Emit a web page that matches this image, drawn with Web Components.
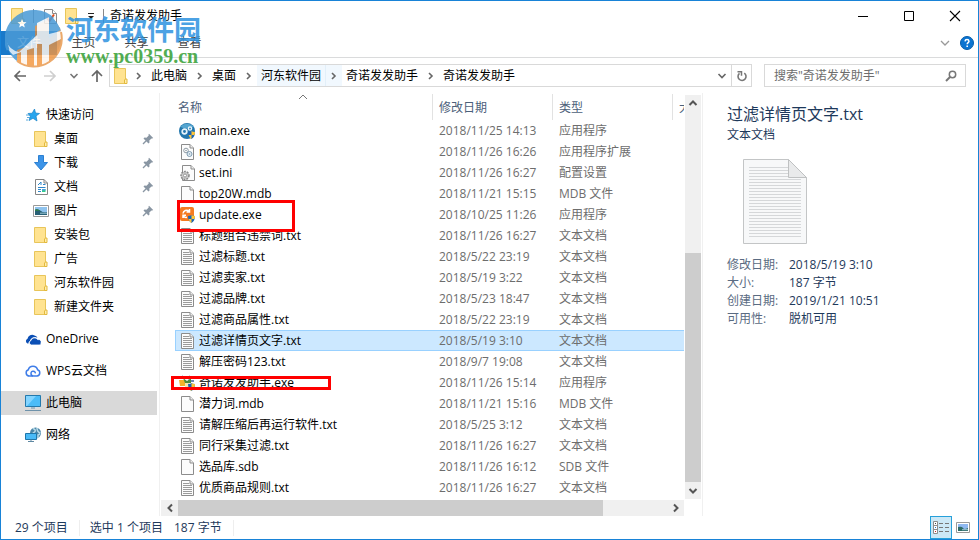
<!DOCTYPE html>
<html lang="zh-CN">
<head>
<meta charset="utf-8">
<title>奇诺发发助手</title>
<style>
html,body{margin:0;background:#fff}
body{font:12px/16px "Open Sans","Noto Sans CJK SC",sans-serif;color:#000}
</style>
</head>
<body>
<explorer-window></explorer-window>
<script>
const ICONS = {
folder:['0 0 14 16',`<path d="M.5.5h11v15H.5z" fill="#ffe391" stroke="#e8c55a"/><path d="M10.500 15.500v-3.500l1-1h1.500v4.500z" fill="#ffeeb0" stroke="#e3b93c"/>`],
check:['0 0 13 15',`<path d="M.5.5h8l4 4v10H.5z" fill="#fafafa" stroke="#8a8a8a"/><path d="M8.500.5v4h4" fill="#fff" stroke="#8a8a8a"/><path d="M3 9l2.500 3L10 5.500" fill="none" stroke="#e0501e" stroke-width="2"/>`],
qat:['0 0 8 8',`<path d="M1 1.500h6" stroke="#222"/><path d="M1 4h6L4 7z" fill="#222"/>`],
min:['0 0 12 12',`<path d="M1 6.500h10" stroke="#000"/>`],
max:['0 0 12 12',`<path d="M1.500 1.500h9v9h-9z" fill="none" stroke="#000"/>`],
close:['0 0 12 12',`<path d="M1 1l10 10M11 1L1 11" stroke="#000" stroke-width="1.100"/>`],
down:['0 0 10 8',`<path d="M1.500 2L5 5.500 8.500 2" fill="none" stroke="currentColor" stroke-width="1.600"/>`],
downthin:['0 0 10 8',`<path d="M1 2l4 4 4-4" fill="none" stroke="#999" stroke-width="1.300"/>`],
help:['0 0 14 14',`<circle cx="7" cy="7" r="6.500" fill="#0b74d1" stroke="#075da9"/><path d="M5 5.300Q5.200 3.500 7 3.500T9 5.300C9 6.700 7.200 6.700 7.200 8.300" fill="none" stroke="#fff" stroke-width="1.500"/><path d="M6.400 9.500h1.600v1.500H6.400z" fill="#fff"/>`],
back:['0 0 14 12',`<path d="M13 6H2M7 1L2 6l5 5" fill="none" stroke="#666" stroke-width="1.700"/>`],
fwd:['0 0 14 12',`<path d="M1 6h11M7 1l5 5-5 5" fill="none" stroke="#cfcfcf" stroke-width="1.700"/>`],
up:['0 0 12 14',`<path d="M6 13V2M1 7l5-5 5 5" fill="none" stroke="#666" stroke-width="1.700"/>`],
right:['0 0 8 10',`<path d="M2 2l3 3-3 3" fill="none" stroke="currentColor" stroke-width="1.600"/>`],
refresh:['0 0 12 12',`<path d="M8.300 3.200A4 4 0 1 1 3.500 3.400" fill="none" stroke="#777" stroke-width="1.600"/><path d="M1.500 1.700h4v4" fill="none" stroke="#777" stroke-width="1.500"/>`],
search:['0 0 12 12',`<circle cx="7.500" cy="4.500" r="3.200" fill="none" stroke="#777" stroke-width="1.500"/><path d="M5 7L1 11" stroke="#777" stroke-width="2"/>`],
star:['0 0 14 14',`<path d="M8.500 1l1 4 4 .5-3.500 2.500 1 5-4-2.700-4 2.200 1.300-4.200L2 5.500l4.200-.300z" fill="#27a5ee" stroke="#1683c9" stroke-width=".7"/><path d="M0 7h3M1 9.500h3M0 12h2" stroke="#5aa9dc"/>`],
download:['0 0 16 16',`<path d="M5.500.5h5v7h4L8 15 1.500 7.500h4z" fill="#3c94e8" stroke="#2c80d2"/>`],
docs:['0 0 13 16',`<path d="M.5.5h8.500l3.500 3.500v11.500H.5z" fill="#fff" stroke="#858585"/><path d="M9 .5v3.500h3.500" fill="none" stroke="#858585"/><path d="M3 6l3-3v3M8 5.500h2.500M3 8.500h7.500M3 10.500h3M3 12.500h3" stroke="#2e86c9" fill="none"/><path d="M7 10h3.500v3H7z" fill="#3c8"/><path d="M7 10h3.500v1.500H7z" fill="#48a0e0"/>`],
picture:['0 0 16 12',`<path d="M.5.5h15v11H.5z" fill="#fff" stroke="#999"/><path d="M2 2h12v8H2z" fill="#8fc3ee"/><path d="M2 5q4-1 6 1t6 1v3H2z" fill="#276075"/><path d="M2 4.500q3-1.500 5 1.500H2z" fill="#2f7a50"/><path d="M7 8.200h7" stroke="#9fc8d8"/>`],
thumbs:['0 0 14 11',`<path d="M.5.5h13v10H.5z" fill="#fff" stroke="#999"/><path d="M2 2h10v7H2z" fill="#8fb8f0"/><path d="M2 5q4-1 5 1t5 0v3H2z" fill="#2d6b66"/><path d="M6 7.700h6" stroke="#9fc8d8"/>`],
pin:['0 0 12 12',`<path d="M7 .8L11.200 5l-1 .6-.7-.2L7.300 7.600l.2 2-1 1L1.500 5.500l1-1 2 .2 2.200-2.200-.2-.9z" fill="#8996a3"/><path d="M4.200 7.800L1 11" stroke="#8996a3" stroke-width="1.300"/>`],
onedrive:['0 0 16 11',`<path d="M2.500 9.500A2.600 2.600 0 0 1 2.500 4.700 4.600 4.600 0 0 1 9.500 1.400 4 4 0 0 1 12.500 4 5 5 0 0 0 4.800 7.200Q3.200 8 3.500 9.500z" fill="#0b4fb5"/><path d="M6.500 11A2.300 2.300 0 0 1 6 6.500 3.600 3.600 0 0 1 12.600 5.600 2.700 2.700 0 0 1 14.300 11z" fill="#0b4fb5" stroke="#fff" stroke-width=".8"/>`],
wps:['0 0 16 12',`<path d="M4 11A3.200 3.200 0 0 1 3.300 4.800 4.800 4.800 0 0 1 12.600 4.800 3.200 3.200 0 0 1 12 11H8.500Q6 11 6 8.500T8.300 6.300 10.300 8.300" fill="none" stroke="#3f7de8" stroke-width="1.500"/><path d="M3.500 11H8" stroke="#3f7de8" stroke-width="1.500"/>`],
pc:['0 0 16 16',`<path d="M.5.5h15v11H.5z" fill="#4bbcf8" stroke="#2479ac"/><path d="M1 1h10L2 11H1z" fill="#83d4ff"/><path d="M4 12.500h8" stroke="#cfe0ea"/><path d="M6 13h4M0 15.500h16" stroke="#6e92aa"/>`],
network:['0 0 16 16',`<circle cx="10.500" cy="6" r="5.500" fill="#4b86a8"/><path d="M8 1.500q3 1 2 3L7 7M12 1q0 4 3.500 5M13 11V8l2-1" fill="none" stroke="#b9dbe9" stroke-width="1.500"/><path d="M.5 6.500h11v6H.5z" fill="#49baf7" stroke="#1e76aa"/><path d="M3 14.500h6M6 12.500v2" stroke="#5e88a2"/>`],
blank:['0 0 13 16',`<path d="M.5.5h8.500l3.500 3.500v11.500H.5z" fill="#fcfcfc" stroke="#8c8c8c"/><path d="M9 .5v3.500h3.500" fill="#eee" stroke="#8c8c8c"/>`],
text:['0 0 13 16',`<path d="M.5.5h8.500l3.500 3.500v11.500H.5z" fill="#fcfcfc" stroke="#8c8c8c"/><path d="M9 .5v3.500h3.500" fill="#eee" stroke="#8c8c8c"/><path d="M2 3.500h6M2 5.500h9M2 7.500h9M2 9.500h9M2 11.500h9M2 13.500h9" stroke="#9b9b9b"/>`],
dll:['0 0 13 16',`<path d="M.5.5h8.500l3.500 3.500v11.500H.5z" fill="#fcfcfc" stroke="#8c8c8c"/><path d="M9 .5v3.500h3.500" fill="#eee" stroke="#8c8c8c"/><circle cx="5" cy="6.500" r="2.300" fill="#fff" stroke="#8e9aa3"/><circle cx="5" cy="6.500" r=".8" fill="#8e9aa3"/><circle cx="8.500" cy="10" r="2.500" fill="#e6f0f7" stroke="#7f9bb0"/><circle cx="8.500" cy="10" r=".8" fill="#7f9bb0"/>`],
ini:['0 0 15 16',`<path d="M2.500.5h8.500l3.500 3.500v11.500h-12z" fill="#fcfcfc" stroke="#8c8c8c"/><path d="M11 .5v3.500h3.500" fill="#eee" stroke="#8c8c8c"/><circle cx="5" cy="10.500" r="4" fill="#c9c9c9" stroke="#888" stroke-width="1.500" stroke-dasharray="1.800 1.100"/><circle cx="5" cy="10.500" r="1.500" fill="#fff" stroke="#888" stroke-width=".8"/>`],
main:['0 0 16 16',`<circle cx="8" cy="8" r="8" fill="#2377ad"/><path d="M1.500 4A8 8 0 0 1 14.500 4Q8 7 1.500 4z" fill="#54a5d0"/><circle cx="5.500" cy="8.500" r="2.300" fill="none" stroke="#e8f4fb" stroke-width="1.700"/><circle cx="11" cy="5.500" r="1.600" fill="none" stroke="#e8f4fb" stroke-width="1.400"/><path d="M9 9q2.500 0 3.500-1 1 1 3.500 1 0 5-3.500 7Q9 14 9 9z" fill="#1c65b4"/><path d="M12.500 8q1 1 3.500 1 0 2-.6 3h-2.900zM9.600 12h2.900v4q-2-1-2.900-4z" fill="#ffc637"/>`],
update:['0 0 16 16',`<rect x="1" width="14" height="14" rx="2" fill="#f47b20"/><path d="M4 6.500a3.600 3.600 0 0 1 6-2.300M10.500 2v3H7.500M4 11V8.200h3M4.400 8.800a3.300 3.300 0 0 0 3.600 1.500" fill="none" stroke="#fff" stroke-width="1.500"/><path d="M9 9q2.500 0 3.500-1 1 1 3.500 1 0 5-3.500 7Q9 14 9 9z" fill="#1c65b4"/><path d="M12.500 8q1 1 3.500 1 0 2-.6 3h-2.900zM9.600 12h2.900v4q-2-1-2.900-4z" fill="#ffc637"/>`],
assistant:['0 0 16 16',`<path d="M0 5h6v6H1z" fill="#f3b42c"/><path d="M4 3l4 3 4-3v5H6z" fill="#4d8e3c"/><path d="M6 8h4v4H6z" fill="#f5e9b0"/><path d="M3 1l2 2M9 4l2-3M12 6h3" stroke="#3a5f9b" stroke-width="1.500" fill="none"/><path d="M9 9q2.500 0 3.500-1 1 1 3.500 1 0 5-3.500 7Q9 14 9 9z" fill="#1c65b4"/><path d="M12.500 8q1 1 3.500 1 0 2-.6 3h-2.900zM9.600 12h2.900v4q-2-1-2.900-4z" fill="#ffc637"/>`],
page:['0 0 64 85',`<path d="M.5.5h45l18 18v66H.5z" fill="#f7f8f9" stroke="#c3c5c6"/><path d="M6 8.500h39M6 11.500h39M6 14.500h39M6 17.500h39M6 20.500h52M6 23.500h52M6 26.500h52M6 29.500h52M6 32.500h52M6 35.500h52M6 38.500h52M6 41.500h52M6 44.500h52M6 47.500h52M6 50.500h52M6 53.500h52M6 56.500h52M6 59.500h52M6 62.500h52M6 65.500h52M6 68.500h52M6 71.500h52M6 74.500h52M6 77.500h52" stroke="#d5d7d9"/><path d="M45.500.5v18h18z" fill="#e9eaeb" stroke="#bfc1c2"/>`],
details:['0 0 16 13',`<path d="M.5.5h4v12h-4zM.5 4.500h4M.5 8.500h4" fill="#fff" stroke="#8d8d8d"/><path d="M2 2h1v1H2z" fill="#444"/><path d="M2 6h1v1H2z" fill="#27c"/><path d="M2 10h1v1H2z" fill="#c22"/><path d="M6 2.500h4M12 2.500h4M6 6.500h4M12 6.500h4M6 10.500h4M12 10.500h4" stroke="#777"/>`],
sort:['0 0 10 6',`<path d="M1 5l4-4 4 4" fill="none" stroke="#777"/>`],
barup:['0 0 10 8',`<path d="M1.500 6L5 2.500 8.500 6" fill="none" stroke="#555" stroke-width="2"/>`],
bardown:['0 0 10 8',`<path d="M1.500 2L5 5.500 8.500 2" fill="none" stroke="#555" stroke-width="2"/>`],
barleft:['0 0 8 10',`<path d="M6 1.500L2.500 5 6 8.500" fill="none" stroke="#555" stroke-width="2"/>`],
barright:['0 0 8 10',`<path d="M2 1.500L5.500 5 2 8.500" fill="none" stroke="#555" stroke-width="2"/>`],
logo:['0 0 58 58',`<defs><clipPath id="c"><circle cx="29" cy="29" r="28"/></clipPath><linearGradient id="g" x1="0" y1="0" x2="0" y2="1"><stop offset=".3" stop-color="#c98a50"/><stop offset=".8" stop-color="#f49a45"/></linearGradient></defs><g clip-path="url(#c)"><path d="M0 0h58v58H0z" fill="#4a9ad6"/><path d="M12 40l18-6V16l12-6 16 8v40H12z" fill="url(#g)"/><path d="M34 0q14 6 24 18l-14 10V8z" fill="#4a9ad6"/><path d="M1 30Q4 40 14 42L32 25V13L44 7v17l12-3v8L44 35v21h-7V34h-5v24h-3V38l-7 2v18h-6V42l-8 3Q2 40 1 30z" fill="#fff" opacity=".9"/></g><path d="M17 9l1.300 3 3.200.2-2.500 2 .8 3.300-2.800-1.800-2.800 1.800.8-3.300-2.500-2 3.200-.200z" fill="#fff"/><path d="M3 40A28 28 0 0 1 48 9" fill="none" stroke="#4a9ad6" stroke-width="3"/><path d="M56 22A28 28 0 0 1 12 51" fill="none" stroke="#e99b52" stroke-width="2"/>`]
};

const define = (name, css, html) => customElements.define(name, class extends HTMLElement {
  connectedCallback() {
    if (this.shadowRoot) return;
    const t = document.createElement('template');
    const reset = '*{box-sizing:border-box}button{font:inherit;color:inherit;border:0;background:none;padding:0;margin:0;display:flex;align-items:center;justify-content:center}a{color:inherit;text-decoration:none}';
    t.innerHTML = `<style>:host{display:block;box-sizing:border-box}${reset}${css}</style>` + (typeof html === 'function' ? html(this) : html);
    this.attachShadow({mode: 'open'}).append(t.content.cloneNode(true));
  }
});

define('ui-icon', ':host{display:inline-flex;flex:none}svg{display:block}', el => {
  const [box, body] = ICONS[el.getAttribute('name')];
  const [, , w, h] = box.split(' ');
  return `<svg viewBox="${box}" width="${w}" height="${h}" aria-hidden="true">${body}</svg>`;
});

define('title-bar', `
:host{display:flex;align-items:center;height:30px;padding-left:10px}
.sep{width:1px;height:14px;background:#888}
.qat{display:flex;align-items:center;gap:8px}
.qat .sep:first-of-type{margin-right:2px}
h1{font:inherit;margin:0 auto 0 6px}
.win{display:flex}
.win button{width:46px;height:28px}`,
`<div class="qat"><ui-icon name="folder"></ui-icon><span class="sep"></span><button aria-label="属性"><ui-icon name="check"></ui-icon></button><button aria-label="新建文件夹"><ui-icon name="folder"></ui-icon></button><button aria-label="自定义"><ui-icon name="qat"></ui-icon></button><span class="sep"></span></div>
<h1>奇诺发发助手</h1>
<div class="win"><button aria-label="最小化"><ui-icon name="min"></ui-icon></button><button aria-label="最大化"><ui-icon name="max"></ui-icon></button><button aria-label="关闭"><ui-icon name="close"></ui-icon></button></div>`);

define('ribbon-tabs', `
:host{display:flex;align-items:flex-start;height:27px;border-bottom:1px solid #dadbdc;color:#444}
button{height:24px;width:53px}
.file{background:#1979ca;color:#fff;width:56px}
.end{margin-left:auto;display:flex;align-items:center;gap:10px;padding-right:4px}
.end button{width:auto}`,
`<button class="file">文件</button><button>主页</button><button>共享</button><button>查看</button>
<div class="end"><button aria-label="展开功能区"><ui-icon name="downthin"></ui-icon></button><button aria-label="帮助"><ui-icon name="help"></ui-icon></button></div>`);

define('crumb-item', `
:host{display:flex;align-items:stretch}
a{display:flex;align-items:center;padding:0 4px;white-space:nowrap}
button{width:17px;color:#666}
:host([active]){background:#f1f8fe}
:host([active]) button{border-left:1px solid #e2eff9}`,
el => `<a href="#"><slot></slot></a>` + (el.hasAttribute('last') ? '' : `<button aria-label="展开"><ui-icon name="right"></ui-icon></button>`));

define('address-bar', `
:host{display:flex;align-items:center;height:35px;padding:0 12px;color:#000}
.go{display:flex;align-items:center;width:96px;gap:12px;color:#777}
.go button:first-child{margin-right:4px}
nav{flex:1;display:flex;height:23px;border:1px solid #d9d9d9;padding-left:4px;min-width:0}
nav>ui-icon{align-self:center}
.root{width:16px;color:#666;margin-left:3px}
.drop{margin-left:auto;width:18px;color:#666}
.re{width:20px;border-left:1px solid #d9d9d9}
form{display:flex;align-items:center;width:202px;height:23px;border:1px solid #d9d9d9;margin:0 0 0 12px;padding:0 8px 0 9px}
input{flex:1;min-width:0;border:0;padding:0;outline:0;font:inherit;background:none}
input::placeholder{color:#6d6d6d;opacity:1}`,
`<div class="go"><button aria-label="后退"><ui-icon name="back"></ui-icon></button><button aria-label="前进"><ui-icon name="fwd"></ui-icon></button><button aria-label="最近位置"><ui-icon name="down"></ui-icon></button><button aria-label="上移"><ui-icon name="up"></ui-icon></button></div>
<nav aria-label="地址"><ui-icon name="folder"></ui-icon><button class="root" aria-label="展开"><ui-icon name="right"></ui-icon></button>
<crumb-item>此电脑</crumb-item><crumb-item>桌面</crumb-item><crumb-item active>河东软件园</crumb-item><crumb-item>奇诺发发助手</crumb-item><crumb-item last>奇诺发发助手</crumb-item>
<button class="drop" aria-label="历史"><ui-icon name="down"></ui-icon></button><button class="re" aria-label="刷新"><ui-icon name="refresh"></ui-icon></button></nav>
<form><input type="search" aria-label="搜索" placeholder='搜索"奇诺发发助手"'><button type="button" aria-label="搜索"><ui-icon name="search"></ui-icon></button></form>`);

define('nav-item', `
a{display:flex;align-items:center;height:24px;padding:0 3px 0 24px}
:host([sub]) a{padding-left:32px}
:host([gap]){margin-top:8px}
:host([selected]) a{background:#d9d9d9}
.ic{display:flex;justify-content:center;width:16px;margin-right:5px}
span{flex:1;white-space:nowrap}`,
el => `<a href="#"><div class="ic"><ui-icon name="${el.getAttribute('icon')}"></ui-icon></div><span><slot></slot></span>${el.hasAttribute('pinned') ? '<ui-icon name="pin"></ui-icon>' : ''}</a>`);

define('nav-pane', `
:host{flex:0 0 159px;padding:10px 2px 0 0;border-right:1px solid #f0f0f0}`,
`<nav aria-label="导航">
<nav-item icon="star">快速访问</nav-item>
<nav-item sub pinned icon="folder">桌面</nav-item><nav-item sub pinned icon="download">下载</nav-item><nav-item sub pinned icon="docs">文档</nav-item><nav-item sub pinned icon="picture">图片</nav-item>
<nav-item sub icon="folder">安装包</nav-item><nav-item sub icon="folder">广告</nav-item><nav-item sub icon="folder">河东软件园</nav-item><nav-item sub icon="folder">新建文件夹</nav-item>
<nav-item gap icon="onedrive">OneDrive</nav-item><nav-item gap icon="wps">WPS云文档</nav-item><nav-item gap selected icon="pc">此电脑</nav-item><nav-item gap icon="network">网络</nav-item></nav>`);

define('scroll-bar', `
:host{display:flex;background:#f0f0f0}
:host([dir=v]){flex-direction:column;width:16px}
:host([dir=h]){height:16px}
button{width:16px;height:16px}
:host([dir=h]) button{width:17px}
.track{flex:1;display:flex;flex-direction:inherit}
.thumb{background:#cdcdcd}`,
el => {
  const v = el.getAttribute('dir') === 'v';
  return `<button aria-label="${v ? '向上' : '向左'}"><ui-icon name="${v ? 'barup' : 'barleft'}"></ui-icon></button><div class="track"><div style="flex:${el.getAttribute('before')}"></div><div class="thumb" style="flex:${el.getAttribute('size')}"></div><div style="flex:${el.getAttribute('after')}"></div></div><button aria-label="${v ? '向下' : '向右'}"><ui-icon name="${v ? 'bardown' : 'barright'}"></ui-icon></button>`;
});

const FILES = [
['main','main.exe','2018/11/25 14:13','应用程序'],['dll','node.dll','2018/11/26 16:26','应用程序扩展'],['ini','set.ini','2018/11/26 16:27','配置设置'],['blank','top20W.mdb','2018/11/21 15:15','MDB 文件'],['update','update.exe','2018/10/25 11:26','应用程序'],['text','标题组合违禁词.txt','2018/11/26 16:27','文本文档'],['text','过滤标题.txt','2018/5/22 23:19','文本文档'],['text','过滤卖家.txt','2018/5/19 3:22','文本文档'],['text','过滤品牌.txt','2018/5/23 18:47','文本文档'],['text','过滤商品属性.txt','2018/5/22 23:19','文本文档'],['text','过滤详情页文字.txt','2018/5/19 3:10','文本文档'],['text','解压密码123.txt','2018/9/7 19:08','文本文档'],['assistant','奇诺发发助手.exe','2018/11/26 15:14','应用程序'],['blank','潜力词.mdb','2018/11/21 15:16','MDB 文件'],['text','请解压缩后再运行软件.txt','2018/5/25 3:12','文本文档'],['text','同行采集过滤.txt','2018/11/26 16:27','文本文档'],['blank','选品库.sdb','2018/11/26 16:12','SDB 文件'],['text','优质商品规则.txt','2018/11/26 16:27','文本文档']];

define('file-table', `
:host{position:relative;overflow:hidden;padding:1px 0 0 15px;flex:1;min-width:0}
table{border-collapse:separate;border-spacing:0;table-layout:fixed;width:100%;line-height:16px}
col.d,col.t{width:120px}col.s{width:12px}
th{height:26px;padding:2px 0 0 6px;font-weight:normal;text-align:left;color:#4c607a;border-left:1px solid #e2e2e2;overflow:hidden;white-space:nowrap}
th:first-child{border:0;padding-left:3px}
.sort{position:absolute;left:138px;top:1px}
td{height:21px;padding:0 0 0 7px;color:#6d6d6d;white-space:nowrap;overflow:hidden;border:solid transparent;border-width:1px 0}
td:first-child{color:#000;padding-left:3px;border-left-width:1px}
.n{display:flex;align-items:center}
.i{display:flex;justify-content:center;width:16px;margin-right:4px}
tr.sel td{background:#cce8ff;border-color:#99d1ff}
mark{position:absolute;background:none;border:3px solid #f00}
mark.one{left:17px;top:107px;width:118px;height:32px}
mark.two{left:11px;top:283px;width:160px;height:14px}`,
`<table><colgroup><col><col class="d"><col class="t"><col class="s"></colgroup><thead><tr><th>名称<ui-icon class="sort" name="sort"></ui-icon></th><th>修改日期</th><th>类型</th><th>大小</th></tr></thead><tbody>${FILES.map((f, i) => `<tr${i === 10 ? ' class="sel"' : ''}><td><div class="n"><span class="i"><ui-icon name="${f[0]}"></ui-icon></span>${f[1]}</div></td><td>${f[2]}</td><td>${f[3]}</td><td></td></tr>`).join('')}</tbody></table><mark class="one"></mark><mark class="two"></mark>`);

define('file-list', `
:host{flex:1;min-width:0;display:flex;flex-direction:column}
.row{flex:1;display:flex;min-height:0}
scroll-bar[dir=h]{margin:0 17px 0 1px}
scroll-bar[dir=v]{margin:2px 0 1px 1px}`,
`<div class="row"><file-table></file-table><scroll-bar dir="v" before="142" size="229" after="1"></scroll-bar></div><scroll-bar dir="h" before="0" size="425" after="64"></scroll-bar>`);

define('details-pane', `
:host{flex:0 0 276px;margin-left:1px;border-left:1px solid #f0f0f0;padding:10px 0 0 24px;color:#1e395b}
h2{font:16px/22px "Open Sans","Noto Sans CJK SC",sans-serif;margin:0}
p{margin:2px 0 0}
.pic{display:flex;margin:16px 0 12px 16px}
dl{display:grid;grid-template-columns:62px 1fr;line-height:18px;margin:0}
dt{color:#5a6b82}dd{margin:0}`,
`<h2>过滤详情页文字.txt</h2><p>文本文档</p><ui-icon class="pic" name="page"></ui-icon><dl><dt>修改日期:</dt><dd>2018/5/19 3:10</dd><dt>大小:</dt><dd>187 字节</dd><dt>创建日期:</dt><dd>2019/1/21 10:51</dd><dt>可用性:</dt><dd>脱机可用</dd></dl>`);

define('status-bar', `
:host{display:flex;align-items:center;height:23px;padding:0 4px 0 14px;color:#1e395b}
span{padding-right:11px;white-space:nowrap}
.b{border-left:1px solid #eee;padding-left:10px}
.b+span{border-right:1px solid #eee}
.views{margin-left:auto;display:flex}
button{width:22px;height:23px}
.on{background:#cce8f6;border:1px solid #26a0da}`,
`<span>29 个项目</span><span class="b">选中 1 个项目</span><span>187 字节</span><div class="views"><button class="on" aria-label="详细信息"><ui-icon name="details"></ui-icon></button><button aria-label="大图标"><ui-icon name="thumbs"></ui-icon></button></div>`);

define('site-mark', `
:host{position:absolute;left:4px;top:9px;display:flex;gap:3px;opacity:.86;pointer-events:none}
.t{display:flex;flex-direction:column;padding-top:4px}
b{font:bold 27px/30px "Noto Sans CJK SC",sans-serif;color:#2f93e0}
i{font:bold 20px/24px "Liberation Serif",serif;color:#36a036}`,
`<ui-icon name="logo"></ui-icon><div class="t"><b>河东软件园</b><i>www.pc0359.cn</i></div>`);

define('explorer-window', `
:host{position:relative;display:flex;flex-direction:column;min-height:100vh;border:1px solid #1883d7;background:#fff}
main{flex:1;display:flex}`,
`<title-bar></title-bar><ribbon-tabs></ribbon-tabs><address-bar></address-bar><main><nav-pane></nav-pane><file-list></file-list><details-pane></details-pane></main><status-bar></status-bar><site-mark></site-mark>`);
</script>
</body>
</html>
